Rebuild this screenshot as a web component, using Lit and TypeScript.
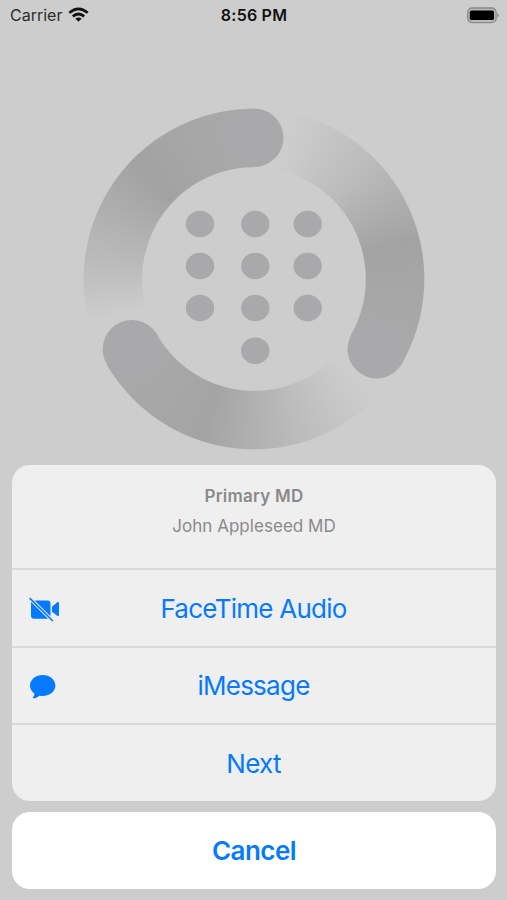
import { LitElement, html, svg, css } from "lit";
import { customElement } from "lit/decorators.js";

const KEYS = [224, 266, 308].flatMap((y) => [200, 255.3, 307.7].map((x) => [x, y])).concat([[255.3, 350.7]]);
const CAPS = [[254.3, 137.7], [376.7, 349.2], [131.9, 349.2]];

@customElement("dial-art")
export class DialArt extends LitElement {
  static styles = css`
    :host { display: grid; height: 435px; }
    .ring, .marks { grid-area: 1 / 1; }
    .ring {
      width: 342px; height: 342px; margin: 77.6px 0 0 83.3px;
      background: conic-gradient(
        #cdcdcd 0deg, #cdcdcd 12deg, #c9c9c9 21deg, #bbbbbb 45deg, #a3a3a3 76deg, #a7a7a8 98deg, #a9a9ab 120deg,
        #cdcdcd 120deg, #cdcdcd 134deg, #c9c9c9 142deg, #bbbbbb 165deg, #a4a4a4 198deg, #a7a7a8 218deg, #a9a9ab 240deg,
        #cdcdcd 240deg, #cdcdcd 255deg, #c8c8c8 261deg, #bcbcbc 275deg, #a2a2a2 314deg, #a7a7a8 338deg, #a9a9ab 360deg);
      -webkit-mask: radial-gradient(circle, transparent 111.3px, #000 112.3px, #000 169.8px, transparent 170.8px);
      mask: radial-gradient(circle, transparent 111.3px, #000 112.3px, #000 169.8px, transparent 170.8px);
    }
    .marks { z-index: 1; width: 507px; height: 435px; fill: #a9a9ab; }
  `;
  render() {
    return html`<div class="ring"></div>
      <svg class="marks" viewBox="0 30 507 435">
        ${CAPS.map(([x, y]) => svg`<circle cx=${x} cy=${y} r="29.2" />`)}
        ${KEYS.map(([x, y]) => svg`<ellipse cx=${x} cy=${y} rx="14.2" ry="13.2" />`)}
      </svg>`;
  }
}

@customElement("app-root")
export class AppRoot extends LitElement {
  static styles = css`
    :host {
      display: flex; flex-direction: column; box-sizing: border-box; width: 507px; height: 900px;
      overflow: hidden; background: #cdcdcd; font-family: Inter, "Liberation Sans", sans-serif;
    }
    .status {
      display: grid; grid-template-columns: 1fr auto 1fr; align-items: center; height: 30px;
      padding: 0 8px 0 10px; box-sizing: border-box; font-size: 16px; color: #2d2d2d;
    }
    .carrier { display: flex; align-items: center; gap: 6px; }
    .time { font-weight: 600; color: #111; letter-spacing: 0.22px; margin-right: 1px; }
    .battery { justify-self: end; display: block; }
    .status svg { display: block; }
    .sheet { margin: 0 11px 0 12px; border-radius: 18px; background: #efefef; overflow: hidden; height: 336px; flex: none; }
    .head { height: 103px; padding-top: 20px; box-sizing: border-box; text-align: center; color: #8a8a8a; font-size: 17px; line-height: 22px; }
    .title { font-weight: 600; margin-bottom: 8px; letter-spacing: 0.25px; }
    .name { letter-spacing: 0.04px; }
    .row {
      display: grid; grid-template-columns: 50px 1fr 50px; align-items: center; height: 77.6px; padding-top: 2px;
      box-sizing: border-box; border-top: 2px solid #d9d9d9; color: #067aff; font-size: 26px; text-align: center;
      letter-spacing: -0.75px;
    }
    .row svg { display: block; margin-left: 16px; fill: #067aff; }
    .row .bubble { margin: -1px 0 0 17px; }
    .label { grid-column: 2; white-space: nowrap; margin: -1px 1px 0 0; }
    .cancel {
      display: flex; align-items: center; justify-content: center; height: 77px; margin: 11px 11px 0 12px;
      border-radius: 18px; background: #fff; color: #067aff; font-size: 26px; font-weight: 600; flex: none;
      letter-spacing: -0.55px;
    }
  `;
  render() {
    return html`
      <div class="status">
        <div class="carrier"><span>Carrier</span>
          <svg width="21" height="16" viewBox="0 0 21 16" fill="none" stroke="#111" stroke-width="2.7">
            <path d="M1.3 5.8Q10.5-2.2 19.7 5.8" /><path d="M4.8 9.4Q10.5 4.6 16.2 9.4" />
            <path d="M10.5 14.8L7.4 11.7Q10.5 9.2 13.6 11.7Z" fill="#111" stroke="none" />
          </svg>
        </div>
        <div class="time">8:56 PM</div>
        <svg class="battery" width="33" height="17" viewBox="0 0 33 17">
          <rect x="1.7" y="1" width="28.4" height="14.6" rx="4.4" fill="#b9b9b9" stroke="#8a8a8a" stroke-width="1.3" />
          <rect x="3.8" y="3.5" width="24.2" height="9.6" rx="1.6" fill="#000" />
          <path d="M31.4 6.3q1.5.7 1.5 2.1T31.4 10.5z" fill="#8a8a8a" />
        </svg>
      </div>
      <dial-art></dial-art>
      <div class="sheet">
        <div class="head"><div class="title">Primary MD</div><div class="name">John Appleseed MD</div></div>
        <div class="row">
          <svg width="34" height="26" viewBox="28 596 34 26">
            <path d="M34.6 600.5H47.5Q50.5 600.5 50.5 603.5V616.2Z" />
            <path d="M31 601.7L48 618.8H34Q31 618.8 31 615.8Z" />
            <path d="M52 606.7L57.2 602.3Q59 601.6 59 603V615Q59 616.7 57.2 615.7L52 611.8Z" />
            <path d="M29.7 598.2L52.8 621" fill="none" stroke="#067aff" stroke-width="1.7" />
          </svg>
          <span class="label">FaceTime Audio</span>
        </div>
        <div class="row">
          <svg class="bubble" width="28" height="26" viewBox="29 673 28 26">
            <path d="M42.7 675C49.8 675 55.4 679.7 55.4 685.6S49.8 696 42.7 696Q41 696 39.5 695.7C37.5 697.4 35.2 698.3 33.4 698.3C32.7 698.3 32.6 697.7 33.1 697.2Q34.5 695.6 34.5 693.8C31.7 691.8 30 688.9 30 685.6C30 679.7 35.6 675 42.7 675Z" />
          </svg>
          <span class="label">iMessage</span>
        </div>
        <div class="row"><span class="label">Next</span></div>
      </div>
      <div class="cancel">Cancel</div>`;
  }
}
